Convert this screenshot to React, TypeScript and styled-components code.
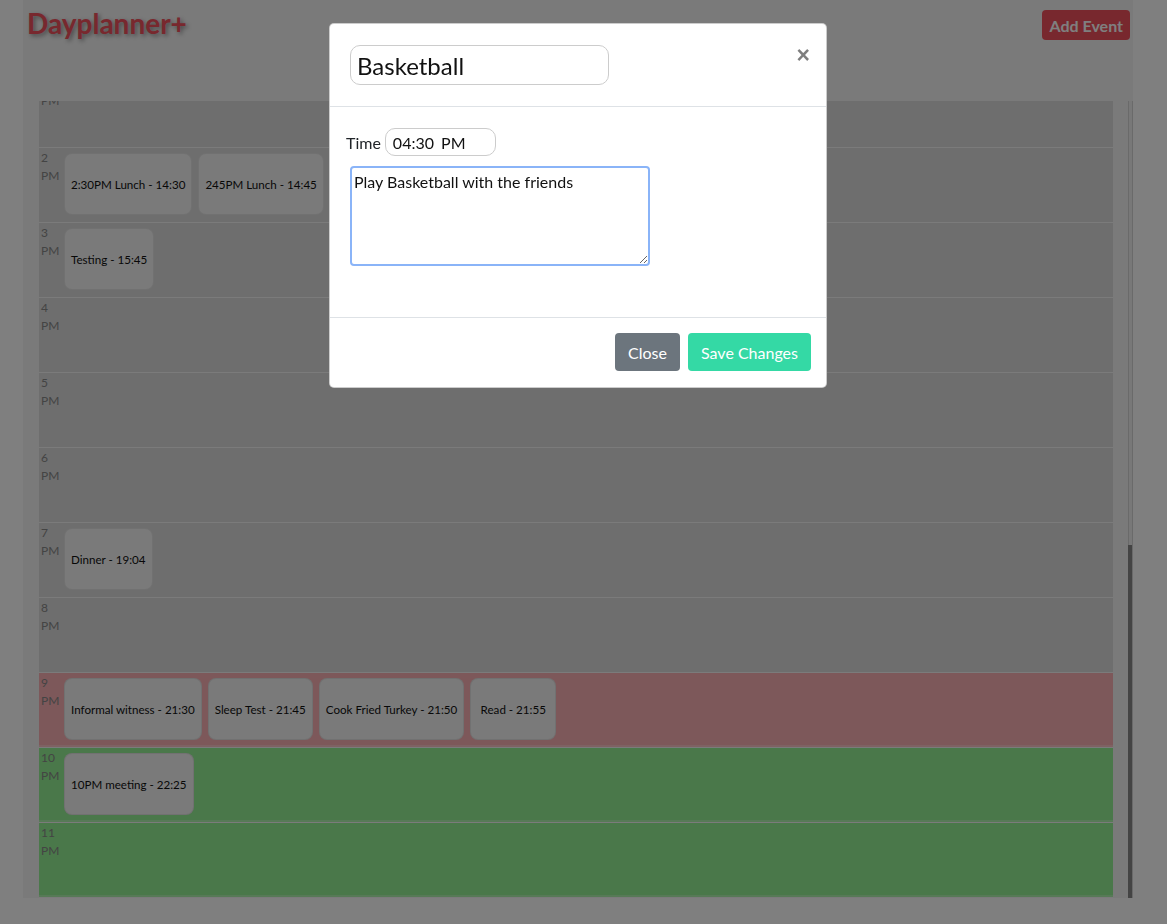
import React, { useEffect, useRef, useState } from 'react';
import styled, { createGlobalStyle } from 'styled-components';

const GlobalStyle = createGlobalStyle`
  body {
    margin: 0;
    background: #ffffff;
    font-family: Lato, "Noto Sans", sans-serif;
    color: #212529;
  }
`;

const Page = styled.div`
  padding-left: 23px;
`;

const Container = styled.div`
  width: 1110px;
  height: 898px;
  background: #f4f4f4;
  display: flex;
  flex-direction: column;
`;

const Header = styled.div`
  height: 101px;
  flex-shrink: 0;
  box-sizing: border-box;
  display: flex;
  justify-content: space-between;
  align-items: flex-start;
  padding: 5px 3px 0 4px;
`;

const Title = styled.h1`
  margin: 0;
  font-size: 28px;
  line-height: 36px;
  font-weight: 700;
  color: #f0505c;
  text-shadow: 2px 2px 4px rgba(0, 0, 0, 0.4);
`;

const AddButton = styled.button`
  margin-top: 5px;
  height: 30px;
  padding: 0 7px;
  border: none;
  border-radius: 4px;
  background: #f0505c;
  color: #ffffff;
  font-family: inherit;
  font-size: 16px;
  font-weight: 700;
`;

const CalendarArea = styled.div`
  display: flex;
  height: 797px;
  margin-left: 16px;
`;

const Scroller = styled.div`
  flex: 1;
  height: 100%;
  overflow-y: scroll;
  scrollbar-width: none;

  &::-webkit-scrollbar {
    display: none;
  }
`;

const ScrollTrack = styled.div`
  position: relative;
  width: 3px;
  height: 100%;
  background: #f0f0f0;
  border-left: 1px solid #d4d4d4;
  border-right: 1px solid #d4d4d4;
`;

const ScrollThumb = styled.div`
  position: absolute;
  left: -1px;
  width: 4px;
  background: #888888;
`;

type Tone = 'past' | 'now' | 'future';

const rowColors: Record<Tone, string> = {
  past: '#dcdcdc',
  now: '#fbb0b4',
  future: '#94f094',
};

const HourRow = styled.div<{ $tone: Tone }>`
  height: 75px;
  box-sizing: border-box;
  margin-right: 15px;
  display: flex;
  align-items: flex-start;
  background: ${({ $tone }) => rowColors[$tone]};
  border-bottom: 1px solid #f6f6f6;
  box-shadow: ${({ $tone }) =>
    $tone === 'past' ? 'none' : 'inset 0 -2px 0 rgba(255, 255, 255, 0.25)'};
`;

const HourLabel = styled.div`
  width: 23px;
  flex-shrink: 0;
  padding: 1px 0 0 2px;
  font-size: 12px;
  line-height: 18px;
  color: #888888;
`;

const EventList = styled.div`
  display: flex;
  gap: 6px;
  margin-top: 5px;
`;

const EventChip = styled.div`
  height: 62px;
  min-width: 86px;
  box-sizing: border-box;
  padding: 0 6px;
  display: flex;
  align-items: center;
  justify-content: center;
  background: #f4f4f4;
  border: 1px solid rgba(0, 0, 0, 0.07);
  border-radius: 8px;
  font-size: 11.6px;
  color: #111111;
  white-space: nowrap;
`;

const Backdrop = styled.div`
  position: fixed;
  inset: 0;
  background: rgba(0, 0, 0, 0.5);
`;

const Modal = styled.div`
  position: fixed;
  top: 23px;
  left: 329px;
  width: 498px;
  box-sizing: border-box;
  background: #ffffff;
  border: 1px solid rgba(0, 0, 0, 0.2);
  border-radius: 5px;
  overflow: hidden;
`;

const ModalHeader = styled.div`
  display: flex;
  align-items: flex-start;
  padding: 16px;
  border-bottom: 1px solid #dee2e6;
`;

const TitleInput = styled.input`
  width: 259px;
  height: 40px;
  box-sizing: border-box;
  margin: 5px 4px;
  padding: 0 6px;
  border: 1px solid #cccccc;
  border-radius: 10px;
  font-family: inherit;
  font-size: 24px;
  color: #111111;
  outline: none;
`;

const CloseX = styled.button`
  margin: -16px -16px -16px auto;
  padding: 20px 16px 16px 16px;
  background: transparent;
  border: none;
  font-family: Arial, "Liberation Sans", sans-serif;
  font-size: 23px;
  font-weight: 700;
  line-height: 1;
  color: #000000;
  opacity: 0.5;
  text-shadow: 0 1px 0 #fff;
`;

const ModalBody = styled.div`
  padding: 21px 16px 16px;
`;

const TimeRow = styled.label`
  display: flex;
  align-items: center;
  gap: 4px;
  font-size: 16px;
  color: #212529;
`;

const TimeInput = styled.input`
  width: 111px;
  height: 28px;
  box-sizing: border-box;
  padding: 0 7px;
  border: 1px solid #cccccc;
  border-radius: 10px;
  font-family: inherit;
  font-size: 16px;
  word-spacing: 3px;
  color: #111111;
  outline: none;
`;

const Notes = styled.textarea`
  display: block;
  width: 300px;
  height: 100px;
  box-sizing: border-box;
  margin: 10px 0 35px 4px;
  padding: 4px 2px;
  border: 2px solid #8ab4f8;
  border-radius: 4px;
  font-family: inherit;
  font-size: 16px;
  color: #111111;
  outline: none;
`;

const ModalFooter = styled.div`
  display: flex;
  justify-content: flex-end;
  gap: 8px;
  padding: 15px 15px 16px;
  border-top: 1px solid #dee2e6;
`;

const FooterButton = styled.button<{ $primary?: boolean }>`
  height: 38px;
  padding: 0 13px;
  border: none;
  border-radius: 4px;
  background: ${({ $primary }) => ($primary ? '#34d9a5' : '#6c757d')};
  color: #ffffff;
  font-family: inherit;
  font-size: 16px;
`;

const events: Record<number, string[]> = {
  14: ['2:30PM Lunch - 14:30', '245PM Lunch - 14:45'],
  15: ['Testing - 15:45'],
  19: ['Dinner - 19:04'],
  21: [
    'Informal witness - 21:30',
    'Sleep Test - 21:45',
    'Cook Fried Turkey - 21:50',
    'Read - 21:55',
  ],
  22: ['10PM meeting - 22:25'],
};

const CURRENT_HOUR = 21;

const formatHour = (hour: number) => {
  const h = hour % 12 === 0 ? 12 : hour % 12;
  return [String(h), hour < 12 ? 'AM' : 'PM'];
};

const App: React.FC = () => {
  const scrollRef = useRef<HTMLDivElement>(null);
  const [thumb, setThumb] = useState({ top: 0, height: 0 });

  const updateThumb = () => {
    const el = scrollRef.current;
    if (!el) return;
    const ratio = el.clientHeight / el.scrollHeight;
    setThumb({
      top: el.scrollTop * ratio,
      height: el.clientHeight * ratio,
    });
  };

  useEffect(() => {
    if (scrollRef.current) {
      scrollRef.current.scrollTop = scrollRef.current.scrollHeight;
    }
    updateThumb();
  }, []);

  const hours = Array.from({ length: 24 }, (_, i) => i);

  return (
    <>
      <GlobalStyle />
      <Page>
        <Container>
          <Header>
            <Title>Dayplanner+</Title>
            <AddButton>Add Event</AddButton>
          </Header>
          <CalendarArea>
            <Scroller ref={scrollRef} onScroll={updateThumb}>
              {hours.map((hour) => {
                const [num, period] = formatHour(hour);
                const tone: Tone =
                  hour < CURRENT_HOUR ? 'past' : hour === CURRENT_HOUR ? 'now' : 'future';
                return (
                  <HourRow key={hour} $tone={tone}>
                    <HourLabel>
                      {num}
                      <br />
                      {period}
                    </HourLabel>
                    <EventList>
                      {(events[hour] || []).map((ev) => (
                        <EventChip key={ev}>{ev}</EventChip>
                      ))}
                    </EventList>
                  </HourRow>
                );
              })}
            </Scroller>
            <ScrollTrack>
              <ScrollThumb style={{ top: thumb.top, height: thumb.height }} />
            </ScrollTrack>
          </CalendarArea>
        </Container>
      </Page>
      <Backdrop />
      <Modal>
        <ModalHeader>
          <TitleInput defaultValue="Basketball" />
          <CloseX>×</CloseX>
        </ModalHeader>
        <ModalBody>
          <TimeRow>
            Time
            <TimeInput defaultValue="04:30 PM" />
          </TimeRow>
          <Notes defaultValue="Play Basketball with the friends" />
        </ModalBody>
        <ModalFooter>
          <FooterButton>Close</FooterButton>
          <FooterButton $primary>Save Changes</FooterButton>
        </ModalFooter>
      </Modal>
    </>
  );
};

export default App;
